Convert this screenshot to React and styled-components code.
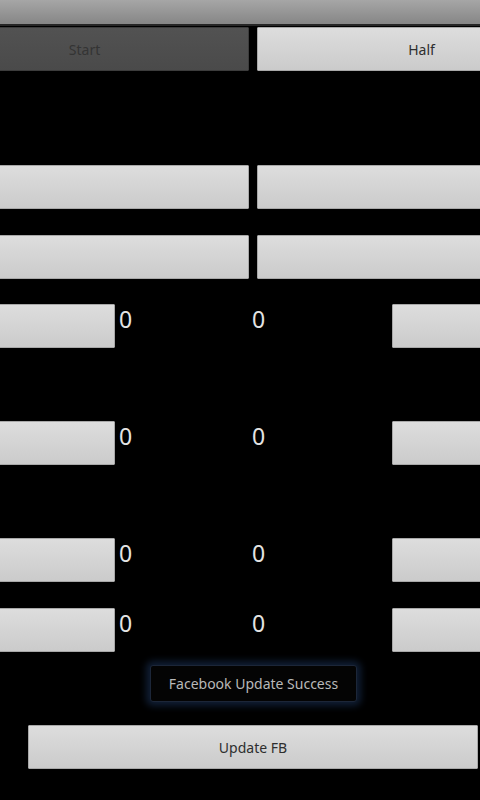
import React from 'react';
import styled, { createGlobalStyle } from 'styled-components';

const GlobalStyle = createGlobalStyle`
  html, body {
    margin: 0;
    padding: 0;
    background: #000;
    overflow: hidden;
  }
  body {
    font-family: "Noto Sans", "Open Sans", sans-serif;
  }
`;

const Screen = styled.div`
  position: relative;
  width: 480px;
  height: 800px;
  overflow: hidden;
  background: #000;
`;

const TitleBar = styled.div`
  height: 24px;
  background: linear-gradient(#a6a6a6, #868686);
  border-bottom: 2px solid #262626;
`;

const Board = styled.div`
  margin-left: -80px;
  width: 666px;
  display: flex;
  flex-direction: column;
`;

const Row = styled.div`
  display: flex;
  align-items: flex-start;
  gap: ${p => p.$gap || 0}px;
  margin-top: ${p => p.$top}px;
  height: 44px;
`;

const Button = styled.div`
  box-sizing: border-box;
  flex: 0 0 ${p => p.$w}px;
  height: 44px;
  margin-left: ${p => p.$ml || 0}px;
  display: flex;
  align-items: center;
  justify-content: center;
  font-size: 14px;
  color: ${p => (p.$disabled ? '#343434' : '#2e2e2e')};
  background: ${p =>
    p.$disabled
      ? 'linear-gradient(#525252, #4a4a4a)'
      : 'linear-gradient(#dddddd, #cbcbcb)'};
  border: 1px solid ${p => (p.$disabled ? '#3c3c3c' : '#a8a8a8')};
  border-radius: 1px;
`;

const Score = styled.div`
  flex: 0 0 133px;
  box-sizing: border-box;
  padding: 4px 0 0 4px;
  font-size: 23px;
  line-height: 23px;
  color: #e4e4e4;
`;

const Footer = styled.div`
  display: flex;
  padding: 73px 2px 0 28px;
`;

const Toast = styled.div`
  position: absolute;
  left: 150px;
  top: 665px;
  width: 207px;
  height: 37px;
  box-sizing: border-box;
  display: flex;
  align-items: center;
  justify-content: center;
  background: #040404;
  border: 1px solid #1c2638;
  border-radius: 3px;
  box-shadow: 0 0 7px 4px rgba(30, 55, 95, 0.55);
  color: #b8b8b8;
  font-size: 14px;
`;

const ScoreRow = ({ top }) => (
  <Row $top={top}>
    <Button $w={195} />
    <Score>0</Score>
    <Score>0</Score>
    <Button $w={195} $ml={11} />
  </Row>
);

export default function App() {
  return (
    <Screen>
      <GlobalStyle />
      <TitleBar />
      <Board>
        <Row $top={1} $gap={8}>
          <Button $w={329} $disabled>Start</Button>
          <Button $w={329}>Half</Button>
        </Row>
        <Row $top={94} $gap={8}>
          <Button $w={329} />
          <Button $w={329} />
        </Row>
        <Row $top={26} $gap={8}>
          <Button $w={329} />
          <Button $w={329} />
        </Row>
        <ScoreRow top={25} />
        <ScoreRow top={73} />
        <ScoreRow top={73} />
        <ScoreRow top={26} />
      </Board>
      <Footer>
        <Button $w={450}>Update FB</Button>
      </Footer>
      <Toast>Facebook Update Success</Toast>
    </Screen>
  );
}
